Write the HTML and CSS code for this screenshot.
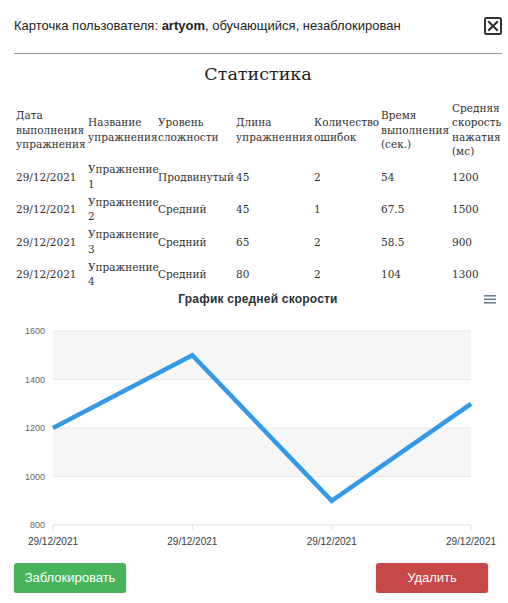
FILE: index.html
```html
<!DOCTYPE html>
<html lang="ru">
<head>
<meta charset="utf-8">
<title>Карточка пользователя</title>
<link rel="stylesheet" href="styles.css">
</head>
<body>
<div class="card">
  <div class="card-head">
    <div class="card-title">Карточка пользователя: <b>artyom</b>, обучающийся, незаблокирован</div>
    <button class="close-btn" aria-label="Закрыть">
      <svg width="18" height="18" viewBox="0 0 18 18"><rect x="1" y="1" width="16" height="16" rx="1.5" fill="none" stroke="#333" stroke-width="2"/><path d="M5 5 L13 13 M13 5 L5 13" stroke="#333" stroke-width="2.2" stroke-linecap="square"/></svg>
    </button>
  </div>
  <hr class="divider">
  <h2 class="stats-title">Статистика</h2>
  <table class="stats">
    <colgroup>
      <col style="width:72px"><col style="width:70px"><col style="width:78px"><col style="width:78px"><col style="width:67px"><col style="width:71px"><col style="width:52px">
    </colgroup>
    <thead>
      <tr>
        <th>Дата выполнения упражнения</th>
        <th>Название упражнения</th>
        <th>Уровень сложности</th>
        <th>Длина упражненния</th>
        <th>Количество ошибок</th>
        <th>Время выполнения (сек.)</th>
        <th>Средняя скорость нажатия (мс)</th>
      </tr>
    </thead>
    <tbody>
      <tr><td>29/12/2021</td><td>Упражнение 1</td><td>Продвинутый</td><td>45</td><td>2</td><td>54</td><td>1200</td></tr>
      <tr><td>29/12/2021</td><td>Упражнение 2</td><td>Средний</td><td>45</td><td>1</td><td>67.5</td><td>1500</td></tr>
      <tr><td>29/12/2021</td><td>Упражнение 3</td><td>Средний</td><td>65</td><td>2</td><td>58.5</td><td>900</td></tr>
      <tr><td>29/12/2021</td><td>Упражнение 4</td><td>Средний</td><td>80</td><td>2</td><td>104</td><td>1300</td></tr>
    </tbody>
  </table>
  <svg class="chart" width="488" height="264" viewBox="14 291 488 264">
    <text class="chart-title" x="258" y="303" text-anchor="middle">График средней скорости</text>
    <g class="menu-icon">
      <rect x="484" y="295" width="12" height="1.6"/>
      <rect x="484" y="298.5" width="12" height="1.6"/>
      <rect x="484" y="302" width="12" height="1.6"/>
    </g>
    <rect x="53" y="331" width="418" height="48.5" fill="#f6f6f6"/>
    <rect x="53" y="428" width="418" height="48.5" fill="#f6f6f6"/>
    <g class="grid">
      <line x1="53" y1="331" x2="471" y2="331"/>
      <line x1="53" y1="379.5" x2="471" y2="379.5"/>
      <line x1="53" y1="428" x2="471" y2="428"/>
      <line x1="53" y1="476.5" x2="471" y2="476.5"/>
    </g>
    <g class="axis">
      <line x1="53" y1="525" x2="471" y2="525"/>
      <line x1="53" y1="525" x2="53" y2="530"/>
      <line x1="192.3" y1="525" x2="192.3" y2="530"/>
      <line x1="331.7" y1="525" x2="331.7" y2="530"/>
      <line x1="471" y1="525" x2="471" y2="530"/>
    </g>
    <g class="ylabels">
      <text x="45" y="334">1600</text>
      <text x="45" y="382.5">1400</text>
      <text x="45" y="431">1200</text>
      <text x="45" y="479.5">1000</text>
      <text x="45" y="528">800</text>
    </g>
    <g class="xlabels">
      <text x="53" y="545">29/12/2021</text>
      <text x="192.3" y="545">29/12/2021</text>
      <text x="331.7" y="545">29/12/2021</text>
      <text x="471" y="545">29/12/2021</text>
    </g>
    <polyline class="series" points="53,428 192.3,355.3 331.7,500.8 471,403.8"/>
  </svg>
  <div class="actions">
    <button class="btn btn-block">Заблокировать</button>
    <button class="btn btn-delete">Удалить</button>
  </div>
</div>
</body>
</html>
```
FILE: styles.css
```css
html, body {
  margin: 0;
  padding: 0;
  background: #fff;
}
body {
  font-family: "Liberation Sans", Arial, sans-serif;
  color: #222;
}
.card {
  width: 488px;
  margin: 0 6px 0 14px;
}
.card-head {
  display: flex;
  justify-content: space-between;
  align-items: center;
  padding-top: 17px;
  height: 18px;
}
.card-title {
  font-size: 13px;
  line-height: 18px;
  color: #222;
}
.card-title b {
  font-weight: bold;
}
.close-btn {
  width: 18px;
  height: 18px;
  padding: 0;
  border: 0;
  background: none;
  display: block;
}
.close-btn svg {
  display: block;
}
.divider {
  margin: 18px 0 0;
  border: 0;
  border-top: 1px solid #999;
  height: 0;
}
.stats-title {
  margin: 10px 0 0;
  font-family: "DejaVu Serif", serif;
  font-weight: normal;
  font-size: 17.5px;
  line-height: 21px;
  text-align: center;
  color: #222;
}
.stats {
  margin-top: 14px;
  width: 488px;
  table-layout: fixed;
  border-collapse: collapse;
  font-family: "DejaVu Serif", serif;
  font-size: 10.5px;
  line-height: 14.5px;
  color: #333;
}
.stats th,
.stats td {
  padding: 1.75px 0 1.75px 2px;
  text-align: left;
  vertical-align: middle;
  font-weight: normal;
  word-break: normal;
}
.chart {
  display: block;
}
.chart-title {
  font-family: "Liberation Sans", Arial, sans-serif;
  font-weight: bold;
  font-size: 12px;
  letter-spacing: 0.2px;
  fill: #263238;
}
.menu-icon rect {
  fill: #6e8192;
}
.grid line {
  stroke: #e8e8e8;
  stroke-width: 1;
}
.axis line {
  stroke: #e0e0e0;
  stroke-width: 1;
}
.ylabels text {
  font-family: "Liberation Sans", Arial, sans-serif;
  font-size: 9px;
  fill: #666;
  text-anchor: end;
}
.xlabels text {
  font-family: "Liberation Sans", Arial, sans-serif;
  font-size: 10px;
  fill: #373d3f;
  text-anchor: middle;
}
.series {
  fill: none;
  stroke: #3399e8;
  stroke-width: 4.5;
  stroke-linejoin: miter;
}
.actions {
  display: flex;
  justify-content: space-between;
  margin-top: 8px;
  padding-right: 14px;
}
.btn {
  width: 112px;
  height: 30px;
  border: 0;
  border-radius: 3px;
  color: #fff;
  font-family: "Liberation Sans", Arial, sans-serif;
  font-size: 13px;
  box-shadow: 0 1px 2px rgba(0,0,0,0.25);
}
.btn-block {
  background: #47b35b;
}
.btn-delete {
  background: #c74848;
}
```
